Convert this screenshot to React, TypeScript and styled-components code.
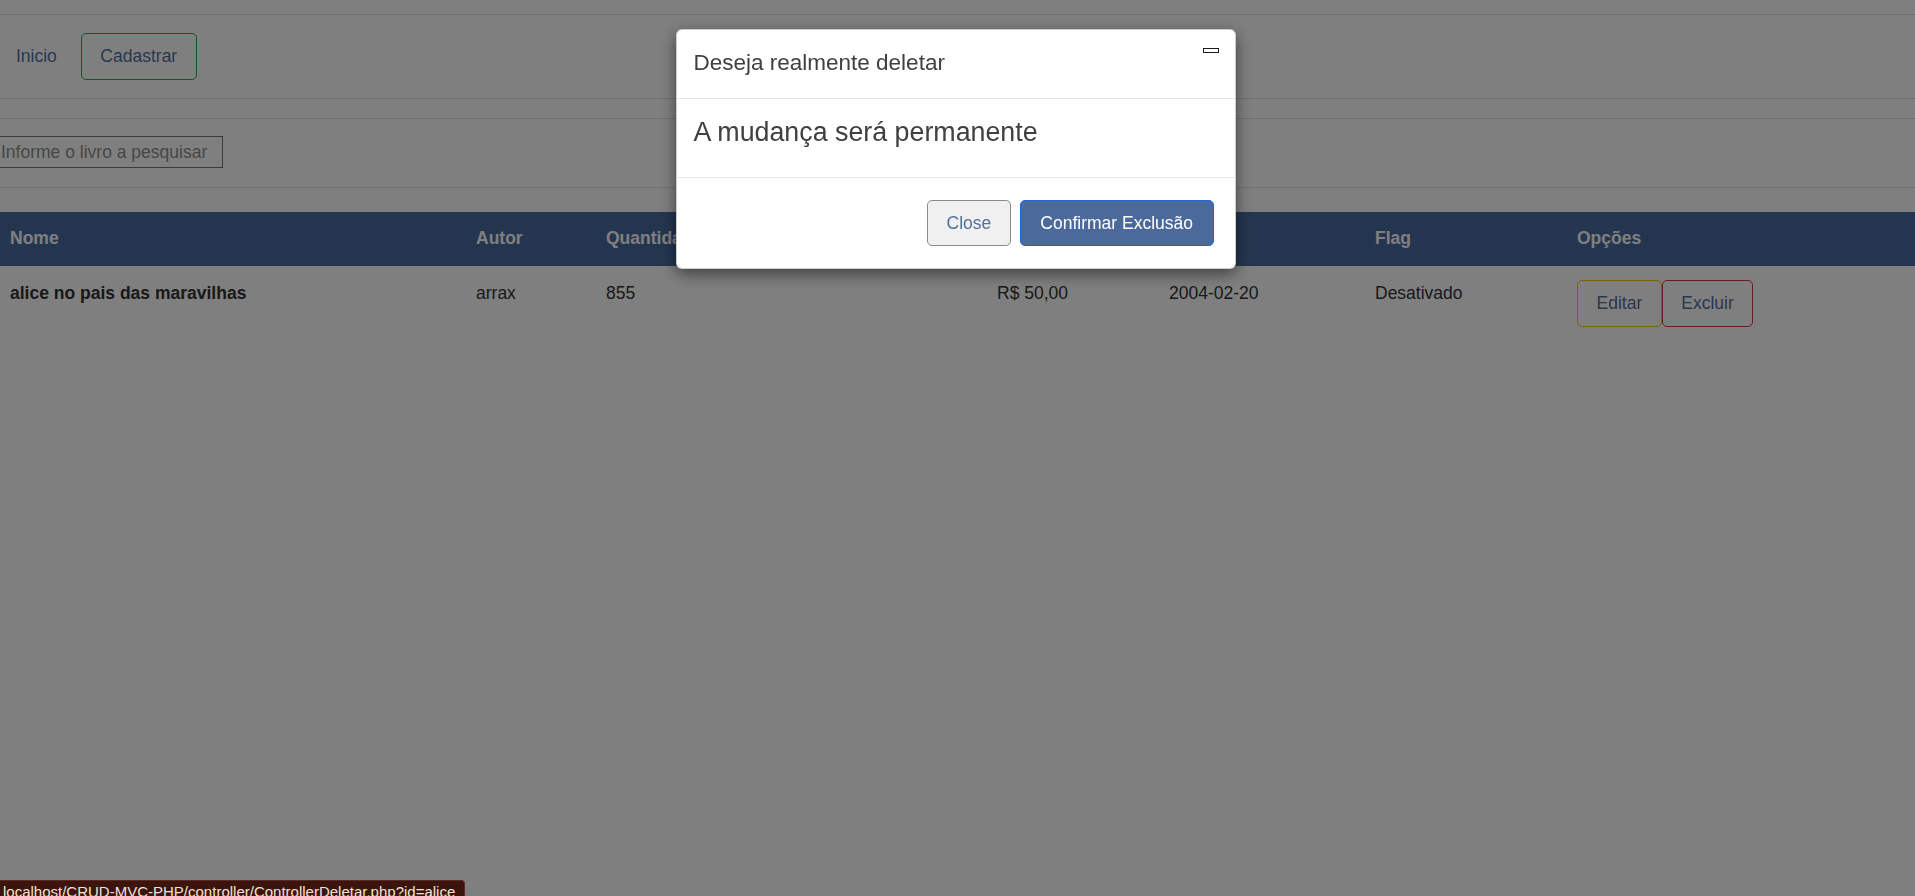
import React from "react";
import styled, { createGlobalStyle } from "styled-components";

const Global = createGlobalStyle`
  html, body { margin: 0; padding: 0; }
  body {
    background: #ffffff;
    font-family: "Liberation Sans", Arial, Helvetica, sans-serif;
    font-size: 17.5px;
    color: #333333;
    overflow: hidden;
  }
  * { box-sizing: border-box; }
`;

const LINK = "#52709f";

const Page = styled.div`
  display: flex;
  flex-direction: column;
  padding-top: 14px;
`;

const Rule = styled.hr<{ $gap?: number }>`
  margin: 0;
  margin-bottom: ${(p) => p.$gap ?? 0}px;
  border: 0;
  border-top: 1px solid #e0e0e0;
`;

const Nav = styled.nav`
  display: flex;
  align-items: center;
  gap: 24px;
  padding: 18px 16px;
`;

const NavLink = styled.a`
  color: ${LINK};
  text-decoration: none;
  font-size: 17.5px;
  line-height: 26px;
  margin-top: -1px;
`;

const OutlineButton = styled.button<{ $tone: string }>`
  height: 47px;
  padding: 0 18.5px;
  font-family: inherit;
  font-size: 17.5px;
  color: ${LINK};
  background: transparent;
  border: 1px solid ${(p) => p.$tone};
  border-radius: 5px;
  cursor: pointer;
`;

const SearchBar = styled.form`
  display: flex;
  padding: 17px 0 19px;
  margin-left: -3px;
`;

const SearchInput = styled.input`
  width: 226px;
  height: 32px;
  padding: 0 3px;
  font-family: inherit;
  font-size: 17.5px;
  background: transparent;
  border: 1px solid #767676;
  border-radius: 0;
  color: #333;
  &::placeholder { color: #8e8e8e; }
`;

const Card = styled.div`
  margin-top: 24px;
  background: #fff;
  box-shadow: 0 3px 6px rgba(0, 0, 0, 0.14);
`;

const Table = styled.table`
  width: 100%;
  border-collapse: collapse;
  table-layout: fixed;
`;

const Col = styled.col<{ $w?: number }>`
  width: ${(p) => (p.$w ? `${p.$w}px` : "auto")};
`;

const HeadRow = styled.tr`
  background: #496c9f;
`;

const HeadCell = styled.th`
  text-align: left;
  color: #ffffff;
  font-weight: bold;
  font-size: 17.5px;
  line-height: 26px;
  padding: 12.5px 10px 15.5px;
  white-space: nowrap;
`;

const Cell = styled.td<{ $bold?: boolean }>`
  vertical-align: top;
  padding: 14px 10px;
  font-size: 17.5px;
  line-height: 26px;
  color: #333;
  font-weight: ${(p) => (p.$bold ? "bold" : "normal")};
`;

const Actions = styled.div`
  display: flex;
  gap: 0;
`;

const Backdrop = styled.div`
  position: fixed;
  inset: 0;
  background: rgba(0, 0, 0, 0.5);
`;

const ModalLayer = styled.div`
  position: fixed;
  inset: 0;
  display: flex;
  justify-content: center;
  align-items: flex-start;
  padding-top: 29px;
  padding-right: 4px;
`;

const Modal = styled.div`
  width: 560px;
  background: #fff;
  border: 1px solid rgba(0, 0, 0, 0.2);
  border-radius: 6px;
  box-shadow: 0 5px 15px rgba(0, 0, 0, 0.5);
  display: flex;
  flex-direction: column;
`;

const ModalHeader = styled.div`
  display: flex;
  justify-content: space-between;
  align-items: flex-start;
  padding: 17px 16px 19px 17px;
  border-bottom: 1px solid #e5e5e5;
`;

const ModalTitle = styled.h4`
  margin: 0;
  font-size: 22.5px;
  line-height: 32px;
  font-weight: normal;
  color: #404040;
`;

const CloseIcon = styled.button`
  margin-top: 1px;
  width: 16px;
  height: 5px;
  padding: 0;
  background: #fff;
  border: 1px solid #1a1a1a;
  border-radius: 0;
`;

const ModalBody = styled.div`
  padding: 17.5px 17px 30.5px;
  border-bottom: 1px solid #e5e5e5;
`;

const BodyText = styled.p`
  margin: 0;
  font-size: 26.8px;
  line-height: 30px;
  color: #404040;
`;

const ModalFooter = styled.div`
  display: flex;
  justify-content: flex-end;
  gap: 9px;
  padding: 22px 21px 22px;
`;

const ModalButton = styled.button<{ $primary?: boolean }>`
  height: 46px;
  padding: 0 ${(p) => (p.$primary ? "19.5px" : "18.5px")};
  font-family: inherit;
  font-size: 17.5px;
  border-radius: 5px;
  cursor: pointer;
  color: ${(p) => (p.$primary ? "#ffffff" : LINK)};
  background: ${(p) => (p.$primary ? "#4b6a9b" : "#f0f0f0")};
  border: 1px solid ${(p) => (p.$primary ? "#1769d6" : "#8a8a8a")};
`;

const StatusBubble = styled.div`
  position: fixed;
  left: 0;
  bottom: -7px;
  height: 23px;
  padding: 0 9px 0 3px;
  background: #3b140d;
  border: 1px solid #5a2a20;
  border-left: 0;
  border-top-right-radius: 4px;
  color: #f3e2d2;
  font-family: "Liberation Sans", Arial, sans-serif;
  font-size: 15px;
  line-height: 21px;
  white-space: nowrap;
`;

const columns = [
  { label: "Nome", w: 466 },
  { label: "Autor", w: 130 },
  { label: "Quantidade", w: 391 },
  { label: "Preço", w: 172 },
  { label: "Data", w: 206 },
  { label: "Flag", w: 202 },
  { label: "Opções" },
];

export default function App() {
  return (
    <>
      <Global />
      <Page>
        <Rule />
        <Nav>
          <NavLink href="#">Inicio</NavLink>
          <OutlineButton $tone="#28a745">Cadastrar</OutlineButton>
        </Nav>
        <Rule $gap={19} />
        <Rule />
        <SearchBar onSubmit={(e) => e.preventDefault()}>
          <SearchInput placeholder="Informe o livro a pesquisar" />
        </SearchBar>
        <Rule />
        <Card>
          <Table>
            <colgroup>
              {columns.map((c) => (
                <Col key={c.label} $w={c.w} />
              ))}
            </colgroup>
            <thead>
              <HeadRow>
                {columns.map((c) => (
                  <HeadCell key={c.label}>{c.label}</HeadCell>
                ))}
              </HeadRow>
            </thead>
            <tbody>
              <tr>
                <Cell $bold>alice no pais das maravilhas</Cell>
                <Cell>arrax</Cell>
                <Cell>855</Cell>
                <Cell>R$ 50,00</Cell>
                <Cell>2004-02-20</Cell>
                <Cell>Desativado</Cell>
                <Cell>
                  <Actions>
                    <OutlineButton $tone="#ffc107">Editar</OutlineButton>
                    <OutlineButton $tone="#dc3545">Excluir</OutlineButton>
                  </Actions>
                </Cell>
              </tr>
            </tbody>
          </Table>
        </Card>
      </Page>
      <Backdrop />
      <ModalLayer>
        <Modal role="dialog">
          <ModalHeader>
            <ModalTitle>Deseja realmente deletar</ModalTitle>
            <CloseIcon aria-label="Fechar" />
          </ModalHeader>
          <ModalBody>
            <BodyText>A mudança será permanente</BodyText>
          </ModalBody>
          <ModalFooter>
            <ModalButton>Close</ModalButton>
            <ModalButton $primary>Confirmar Exclusão</ModalButton>
          </ModalFooter>
        </Modal>
      </ModalLayer>
      <StatusBubble>localhost/CRUD-MVC-PHP/controller/ControllerDeletar.php?id=alice</StatusBubble>
    </>
  );
}
